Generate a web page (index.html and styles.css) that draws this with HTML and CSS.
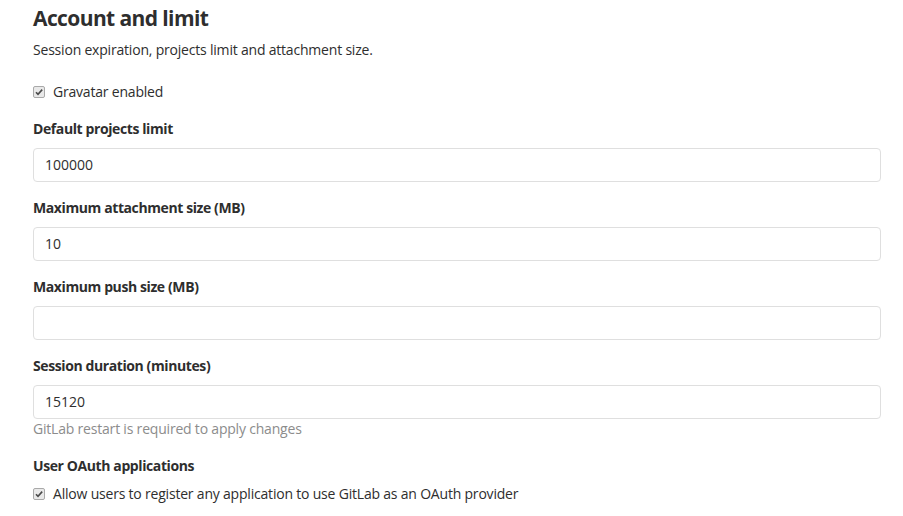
FILE: index.html
```html
<!DOCTYPE html>
<html>
<head>
<meta charset="utf-8">
<link rel="stylesheet" href="styles.css">
</head>
<body>
<section class="settings">
  <h4 class="title">Account and limit</h4>
  <p class="desc">Session expiration, projects limit and attachment size.</p>
  <div class="check-row first">
    <span class="box"><svg viewBox="0 0 12 12" width="12" height="12"><path d="M3 6.2 L5 8.3 L9.2 3.6" fill="none" stroke="#4a4a4a" stroke-width="1.6"/></svg></span>
    <span class="check-label">Gravatar enabled</span>
  </div>
  <div class="group">
    <label class="label">Default projects limit</label>
    <div class="input">100000</div>
  </div>
  <div class="group">
    <label class="label">Maximum attachment size (MB)</label>
    <div class="input">10</div>
  </div>
  <div class="group">
    <label class="label">Maximum push size (MB)</label>
    <div class="input"></div>
  </div>
  <div class="group">
    <label class="label">Session duration (minutes)</label>
    <div class="input">15120</div>
    <div class="help">GitLab restart is required to apply changes</div>
  </div>
  <div class="group oauth">
    <label class="label">User OAuth applications</label>
    <div class="check-row">
      <span class="box"><svg viewBox="0 0 12 12" width="12" height="12"><path d="M3 6.2 L5 8.3 L9.2 3.6" fill="none" stroke="#4a4a4a" stroke-width="1.6"/></svg></span>
      <span class="check-label">Allow users to register any application to use GitLab as an OAuth provider</span>
    </div>
  </div>
</section>
</body>
</html>
```
FILE: styles.css
```css
html, body {
  margin: 0;
  padding: 0;
  background: #fff;
}
body {
  font-family: "Open Sans", "Noto Sans", sans-serif;
  font-size: 14px;
  letter-spacing: -0.2px;
  color: #2e2e2e;
}
.settings {
  width: 848px;
  padding: 0 0 0 33px;
}
.title {
  margin: 0;
  padding-top: 5px;
  font-size: 21px;
  line-height: 26px;
  font-weight: 700;
  letter-spacing: -0.6px;
  color: #2e2e2e;
}
.desc {
  margin: 9px 0 0;
  line-height: 20px;
}
.check-row {
  display: flex;
  align-items: center;
  height: 20px;
}
.check-row.first {
  margin-top: 22px;
}
.box {
  width: 10px;
  height: 10px;
  border: 1px solid #a9a9a9;
  border-radius: 2px;
  background: #e9e9e9;
  display: flex;
  align-items: center;
  justify-content: center;
  margin-right: 8px;
  overflow: hidden;
}
.box svg {
  flex: none;
}
.check-label {
  line-height: 20px;
}
.group {
  margin-top: 16px;
}
.check-row.first + .group {
  margin-top: 17px;
}
.label {
  display: block;
  font-weight: 700;
  letter-spacing: -0.4px;
  line-height: 20px;
  margin-bottom: 9px;
}
.input {
  box-sizing: border-box;
  height: 34px;
  border: 1px solid #dfdfdf;
  border-radius: 4px;
  padding: 0 11px;
  line-height: 32px;
  letter-spacing: 0;
}
.help {
  color: #8c8c8c;
  line-height: 20px;
  margin-top: 0;
}
.group.oauth {
  margin-top: 17px;
}
.oauth .label {
  margin-bottom: 8px;
}
```
